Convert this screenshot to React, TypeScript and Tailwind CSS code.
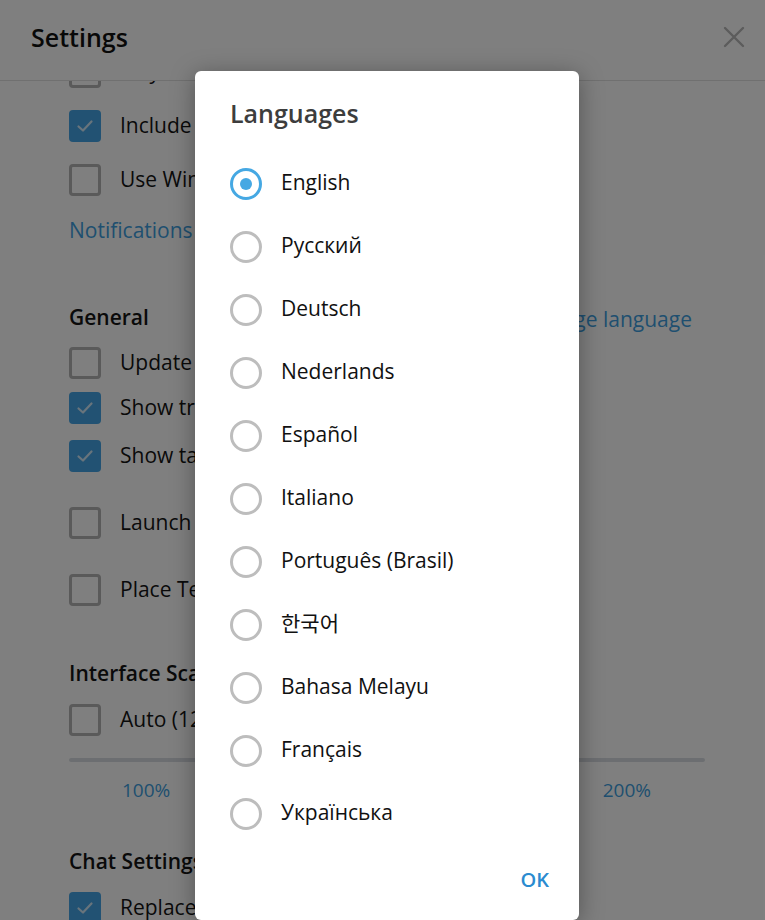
import React from "react";

const FONT = "font-['Open_Sans','Noto_Sans_CJK_KR',sans-serif]";

function Checkbox({ checked }: { checked?: boolean }) {
  if (checked) {
    return (
      <div className="flex h-[32px] w-[32px] shrink-0 items-center justify-center rounded-[4px] bg-[#45a5e6]">
        <svg width="18" height="14" viewBox="0 0 18 14" fill="none">
          <path d="M2.5 7.5 L7 11.5 L15.5 2.5" stroke="#ffffff" strokeOpacity="0.75" strokeWidth="2.2" strokeLinecap="round" strokeLinejoin="round" />
        </svg>
      </div>
    );
  }
  return <div className="h-[32px] w-[32px] shrink-0 rounded-[4px] border-[3px] border-[#b4b4b4]" />;
}

function Row({ h, checked, label }: { h: string; checked?: boolean; label: string }) {
  return (
    <div className={`flex items-center gap-[19px] ${h}`}>
      <Checkbox checked={checked} />
      <span className="whitespace-nowrap text-[21px] text-[#141414]">{label}</span>
    </div>
  );
}

const languages = [
  "English",
  "Русский",
  "Deutsch",
  "Nederlands",
  "Español",
  "Italiano",
  "Português (Brasil)",
  "한국어",
  "Bahasa Melayu",
  "Français",
  "Українська",
];

export default function App() {
  return (
    <div className={`relative flex h-[920px] w-[765px] flex-col overflow-hidden bg-white ${FONT}`}>
      {/* Header */}
      <div className="flex h-[81px] shrink-0 items-center justify-between border-b border-[#e0e0e0] pl-[31px] pr-[20px]">
        <span className="pb-[5px] text-[25px] font-semibold text-[#111]">Settings</span>
        <svg width="22" height="22" viewBox="0 0 22 22" className="mb-[6px]">
          <path d="M2 2 L20 20 M20 2 L2 20" stroke="#b8b8b8" strokeWidth="2.4" strokeLinecap="round" />
        </svg>
      </div>

      {/* Scrolled content */}
      <div className="flex-1 overflow-hidden">
        <div className="-mt-[36px] flex flex-col pl-[69px] pr-[60px]">
          <Row h="h-[54px]" label="Play sound" />
          <Row h="h-[54px]" checked label="Include muted chats in unread count" />
          <Row h="h-[54px]" label="Use Windows notifications" />
          <div className="flex h-[48px] items-center text-[21px] text-[#3f9fe0]">Notifications position and count</div>
          <div className="h-[41px]" />
          <div className="flex h-[44px] items-center justify-between pr-[13px]">
            <span className="text-[21px] font-semibold text-[#141414]">General</span>
            <span className="pt-[4px] text-[21px] text-[#3f9fe0]">Change language</span>
          </div>
          <Row h="h-[46px]" label="Update automatically" />
          <Row h="h-[44px]" checked label="Show tray icon" />
          <Row h="h-[52px]" checked label="Show taskbar icon" />
          <Row h="h-[82px]" label="Launch Telegram when system starts" />
          <Row h="h-[52px]" label="Place Telegram in “Send to” menu" />
          <div className="h-[36px]" />
          <div className="flex h-[44px] items-center">
            <span className="text-[21px] font-semibold text-[#141414]">Interface Scale</span>
          </div>
          <Row h="h-[48px]" label="Auto (125%)" />
          <div className="flex h-[32px] items-center">
            <div className="h-[4px] w-full rounded-full bg-[#d8dde3]" />
          </div>
          <div className="flex h-[28px] items-center justify-between pl-[53px] pr-[54px] text-[19px] text-[#3f9fe0]">
            <span>100%</span>
            <span>150%</span>
            <span>200%</span>
          </div>
          <div className="h-[36px]" />
          <div className="flex h-[44px] items-center">
            <span className="text-[21px] font-semibold text-[#141414]">Chat Settings</span>
          </div>
          <Row h="h-[48px]" checked label="Replace emoji" />
        </div>
      </div>

      {/* Overlay */}
      <div className="absolute inset-0 bg-black/50" />

      {/* Dialog */}
      <div className="absolute left-[195px] top-[71px] flex h-[849px] w-[384px] flex-col rounded-[6px] bg-white pl-[35px] pr-[30px] pt-[26px] shadow-[0_4px_24px_rgba(0,0,0,0.35)]">
        <div className="h-[32px] text-[25px] font-semibold leading-[32px] text-[#3d3d3d]">Languages</div>
        <div className="mt-[23px] flex flex-col">
          {languages.map((lang, i) => (
            <div key={lang} className="flex h-[63px] items-center gap-[19px]">
              {i === 0 ? (
                <div className="flex h-[32px] w-[32px] shrink-0 items-center justify-center rounded-full border-[3px] border-[#45a8e3]">
                  <div className="h-[12px] w-[12px] rounded-full bg-[#45a8e3]" />
                </div>
              ) : (
                <div className="h-[32px] w-[32px] shrink-0 rounded-full border-[3px] border-[#bdbdbd]" />
              )}
              <span className="pb-[1px] text-[21px] text-[#111]">{lang}</span>
            </div>
          ))}
        </div>
        <div className="mt-[15px] flex h-[40px] items-center justify-end">
          <span className="text-[20px] font-semibold text-[#2a8bd0]">OK</span>
        </div>
      </div>
    </div>
  );
}
